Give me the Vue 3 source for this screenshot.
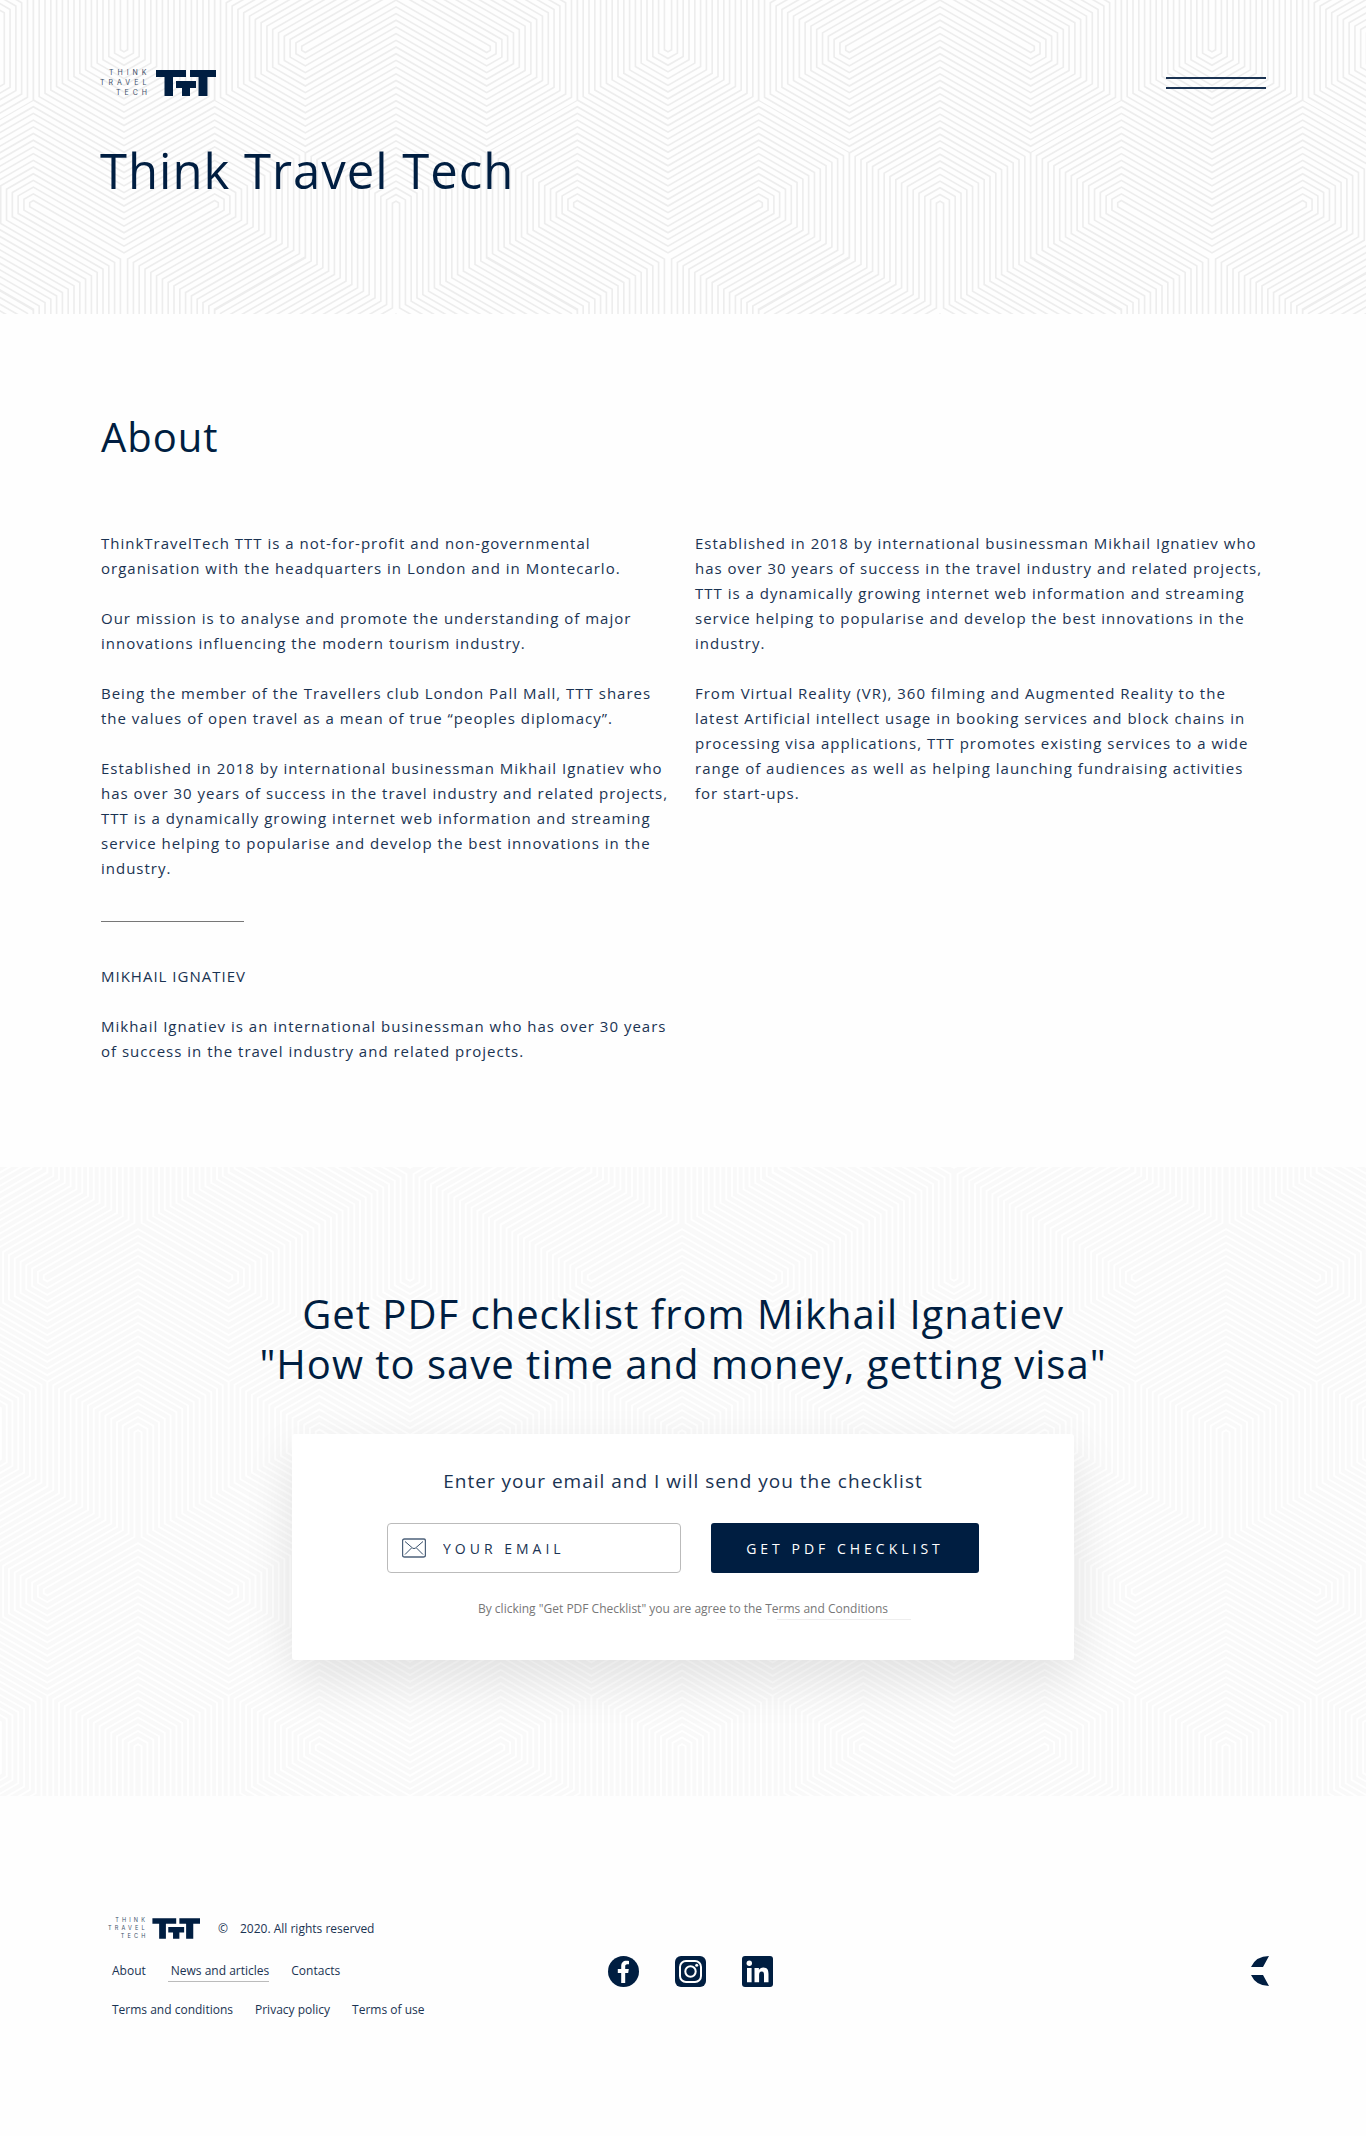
<script setup>
import { h, ref } from 'vue'

const email = ref('')

const leftColumn = [
  'ThinkTravelTech TTT is a not-for-profit and non-governmental organisation with the headquarters in London and in Montecarlo.',
  'Our mission is to analyse and promote the understanding of major innovations influencing the modern tourism industry.',
  'Being the member of the Travellers club London Pall Mall, TTT shares the values of open travel as a mean of true “peoples diplomacy”.',
  'Established in 2018 by international businessman Mikhail Ignatiev who has over 30 years of success in the travel industry and related projects, TTT is a dynamically growing internet web information and streaming service helping to popularise and develop the best innovations in the industry.',
]
const rightColumn = [
  leftColumn[3],
  'From Virtual Reality (VR), 360 filming and Augmented Reality to the latest Artificial intellect usage in booking services and block chains in processing visa applications, TTT promotes existing services to a wide range of audiences as well as helping launching fundraising activities for start-ups.',
]

// Repeating line ornament: nested hexagonal outlines around three-armed seeds.
const TILE_W = 544
const TILE_H = 314
const COL = TILE_W / 6
const ARM = TILE_H / 3

function capsule(x1, y1, x2, y2, d) {
  const s = (2 * d) / Math.sqrt(3)
  const pts = []
  for (const [x, y] of [[x1, y1], [x2, y2]]) {
    pts.push([x, y - s], [x + d, y - s / 2], [x + d, y + s / 2], [x, y + s], [x - d, y + s / 2], [x - d, y - s / 2])
  }
  pts.sort((a, b) => a[0] - b[0] || a[1] - b[1])
  const cross = (o, a, b) => (a[0] - o[0]) * (b[1] - o[1]) - (a[1] - o[1]) * (b[0] - o[0])
  const half = (list) => {
    const out = []
    for (const p of list) {
      while (out.length > 1 && cross(out[out.length - 2], out[out.length - 1], p) <= 0) out.pop()
      out.push(p)
    }
    out.pop()
    return out
  }
  const hull = half(pts).concat(half(pts.slice().reverse()))
  return 'M' + hull.map((p) => p[0].toFixed(2) + ' ' + p[1].toFixed(2)).join('L') + 'Z'
}

const seeds = []
for (let i = -1; i <= 1; i++) {
  for (let j = -1; j <= 2; j++) {
    seeds.push([124 + i * TILE_W, 257 + j * TILE_H - TILE_H, 1])
    seeds.push([396 + i * TILE_W, 310 + j * TILE_H - TILE_H, -1])
  }
}

function outline(d) {
  return seeds
    .map(([x, y, dir]) =>
      capsule(x, y, x, y + dir * ARM, d) +
      capsule(x, y, x - COL, y - (dir * ARM) / 2, d) +
      capsule(x, y, x + COL, y - (dir * ARM) / 2, d))
    .join('')
}

function makeRings(halfLine) {
  const rings = []
  for (let k = 15; k >= 0; k--) {
    const d = 3.6 + k * 5.8
    rings.push({ key: k, outer: outline(d + halfLine), inner: outline(d - halfLine) })
  }
  return rings
}
const heroRings = makeRings(0.8)
const signupRings = makeRings(1)

const Logo = () =>
  h('svg', { viewBox: '0 0 116 26', overflow: 'visible', role: 'img', 'aria-label': 'Think Travel Tech' }, [
    h('g', { fill: '#3d5069', 'font-family': 'Inter, sans-serif', 'font-size': 7, 'letter-spacing': 4 }, [
      h('text', { x: 9, y: 5 }, 'THINK'),
      h('text', { x: 0, y: 15 }, 'TRAVEL'),
      h('text', { x: 16, y: 25 }, 'TECH'),
    ]),
    h('path', {
      fill: '#001e41',
      d: 'M56 0h30v7H73v19h-8.500V7H56zM90 0h26v7h-8.500v19h-9V7H90zM76 11h20v7h-6v8h-8v-8h-6z',
    }),
  ])
</script>

<template>
  <div class="page">
    <header class="hero">
      <svg class="ornament" aria-hidden="true">
        <defs>
          <pattern id="hex-lines" patternUnits="userSpaceOnUse" x="0" y="0" :width="TILE_W" :height="TILE_H">
            <template v-for="r in heroRings" :key="r.key">
              <path :d="r.outer" fill="#ededed" />
              <path :d="r.inner" fill="#fefefe" />
            </template>
          </pattern>
        </defs>
        <rect width="100%" height="100%" fill="url(#hex-lines)" />
      </svg>
      <div class="topbar">
        <a class="logo" href="#"><Logo /></a>
        <button class="menu" type="button" aria-label="Menu"><span></span><span></span></button>
      </div>
      <h1>Think Travel Tech</h1>
    </header>

    <main>
      <section class="about">
        <h2>About</h2>
        <div class="columns">
          <div class="column">
            <p v-for="(text, i) in leftColumn" :key="i">{{ text }}</p>
            <hr />
            <p>MIKHAIL IGNATIEV</p>
            <p>Mikhail Ignatiev is an international businessman who has over 30 years of success in the travel industry and related projects.</p>
          </div>
          <div class="column">
            <p v-for="(text, i) in rightColumn" :key="i">{{ text }}</p>
          </div>
        </div>
      </section>

      <section class="signup">
        <svg class="ornament" aria-hidden="true">
          <defs>
            <pattern id="hex-lines-soft" patternUnits="userSpaceOnUse" x="286" y="62" :width="TILE_W" :height="TILE_H">
              <template v-for="r in signupRings" :key="r.key">
                <path :d="r.outer" fill="#fff" />
                <path :d="r.inner" fill="#f9f9f9" />
              </template>
            </pattern>
          </defs>
          <rect width="100%" height="100%" fill="url(#hex-lines-soft)" />
        </svg>
        <h2>Get PDF checklist from Mikhail Ignatiev<br />"How to save time and money, getting visa"</h2>
        <form class="card" @submit.prevent>
          <label class="lead" for="email">Enter your email and I will send you the checklist</label>
          <div class="fields">
            <div class="field">
              <svg viewBox="0 0 24 20" aria-hidden="true">
                <g fill="none" stroke="#001e41">
                  <rect x="0.500" y="1" width="23" height="18" rx="2" stroke-opacity=".7" stroke-width="1.400" />
                  <path d="M3 3.500l7.500 6.500q1.500 1.200 3 0L21 3.500M3 16.500l6.500-6.500M21 16.500l-6.500-6.500" stroke-width=".8" />
                </g>
              </svg>
              <input id="email" v-model="email" type="email" placeholder="YOUR EMAIL" />
            </div>
            <button class="submit" type="submit">GET PDF CHECKLIST</button>
          </div>
          <p class="note">By clicking "Get PDF Checklist" you are agree to the <a href="#">Terms and Conditions</a></p>
        </form>
      </section>
    </main>

    <footer class="footer">
      <div class="info">
        <div class="copy">
          <a class="logo small" href="#"><Logo /></a>
          <span>©</span>
          <span>2020. All rights reserved</span>
        </div>
        <nav class="links">
          <a href="#">About</a>
          <a class="current" href="#">News and articles</a>
          <a href="#">Contacts</a>
        </nav>
        <nav class="links legal">
          <a href="#">Terms and conditions</a>
          <a href="#">Privacy policy</a>
          <a href="#">Terms of use</a>
        </nav>
      </div>
      <div class="social">
        <a href="#" aria-label="Facebook">
          <svg viewBox="0 0 31 31">
            <circle cx="15.500" cy="15.500" r="15.500" fill="#001e41" />
            <path fill="#fff" d="M13.200 27V16.900H9.800v-3.800h3.400v-3c0-3.500 2-5.400 5.100-5.400 1.400 0 2.700.2 2.700.2v3.400h-1.700c-1.700 0-2.100 1-2.100 2.100v2.700h3.600l-.6 3.800h-3V27z" />
          </svg>
        </a>
        <a href="#" aria-label="Instagram">
          <svg viewBox="0 0 31 31">
            <rect width="31" height="31" rx="6" fill="#001e41" />
            <g fill="none" stroke="#fff" stroke-width="2">
              <rect x="5" y="5" width="21" height="21" rx="6" />
              <circle cx="15.500" cy="15.500" r="5.200" />
            </g>
            <circle cx="21.700" cy="9.300" r="1.500" fill="#fff" />
          </svg>
        </a>
        <a href="#" aria-label="LinkedIn">
          <svg viewBox="0 0 31 31">
            <rect width="31" height="31" rx="3" fill="#001e41" />
            <g fill="#fff">
              <circle cx="7.300" cy="7.300" r="2.700" />
              <path d="M5 12h4.600v14.300H5zM12.500 12h4.400v2c.8-1.400 2.300-2.400 4.400-2.400 4.200 0 5.200 2.800 5.200 6.500v8.200H22v-7.300c0-1.800-.2-3.500-2.300-3.500s-2.600 1.700-2.600 3.400v7.400h-4.600z" />
            </g>
          </svg>
        </a>
      </div>
      <div class="partner">
        <a href="#" aria-label="Partner">
          <svg viewBox="0 0 18 30"><path fill="#001e41" d="M0 11Q5 0 18 0L12 11zM0 19h12l6 11Q5 30 0 19z" /></svg>
        </a>
      </div>
    </footer>
  </div>
</template>

<style>
body {
  margin: 0;
  background: #fefefe;
}
</style>

<style scoped>
.page {
  color: #1a3352;
  font-family: "Open Sans", "Noto Sans", sans-serif;
  font-size: 15px;
  line-height: 25px;
  letter-spacing: 1px;
}
h1,
h2,
p {
  margin: 0;
  font-weight: 400;
}
h1,
h2 {
  color: #001e41;
}
a {
  color: inherit;
  text-decoration: none;
}
svg {
  display: block;
}
.hero {
  position: relative;
  box-sizing: border-box;
  min-height: 314px;
  padding: 70px 100px 0;
}
.ornament {
  position: absolute;
  inset: 0;
  z-index: -1;
  width: 100%;
  height: 100%;
}
.topbar {
  display: flex;
  justify-content: space-between;
}
.logo svg {
  width: 116px;
  height: 26px;
}
.menu {
  display: flex;
  flex-direction: column;
  gap: 8px;
  width: 100px;
  padding: 7px 0;
  border: 0;
  background: none;
}
.menu span {
  width: 100%;
  height: 2px;
  background: #1b3352;
}
h1 {
  margin-top: 39px;
  font-size: 49px;
  line-height: 70px;
}
h2 {
  font-size: 40px;
  line-height: 50px;
}
.about {
  padding: 98px 101px 78px;
}
.columns {
  display: flex;
  gap: 24px;
  margin-top: 69px;
}
.column {
  flex: 1;
}
.column p {
  margin-bottom: 25px;
}
hr {
  width: 143px;
  height: 1px;
  margin: 40px 0 42px;
  border: 0;
  background: #777;
}
.signup {
  position: relative;
  z-index: 0;
  padding: 122px 20px 136px;
  background: #f9f9f9;
  text-align: center;
}
.card {
  display: flex;
  flex-direction: column;
  align-items: center;
  box-sizing: border-box;
  max-width: 782px;
  min-height: 226px;
  margin: 45px auto 0;
  padding: 35px 20px 0;
  border-radius: 3px;
  background: #fff;
  box-shadow: 0 20px 50px rgba(0, 0, 0, 0.1);
}
.lead {
  font-size: 19px;
  line-height: 25px;
}
.fields {
  display: flex;
  gap: 30px;
  margin-top: 29px;
}
.field {
  display: flex;
  align-items: center;
  gap: 17px;
  box-sizing: border-box;
  width: 294px;
  height: 50px;
  padding: 0 14px;
  border: 1px solid #bbb;
  border-radius: 4px;
}
.field svg {
  flex: none;
  width: 24px;
  height: 20px;
}
.field input {
  flex: 1;
  min-width: 0;
  padding: 0;
  border: 0;
  outline: 0;
  background: none;
  color: #1a3352;
  font: inherit;
  font-size: 14px;
  letter-spacing: 4px;
}
.field input::placeholder {
  color: #1a3352;
  opacity: 1;
}
.submit {
  width: 268px;
  height: 50px;
  border: 0;
  border-radius: 3px;
  background: #001e41;
  color: #fff;
  font: inherit;
  font-size: 14px;
  letter-spacing: 4px;
}
.note {
  margin-top: 23px;
  color: #777;
  font-size: 12px;
  letter-spacing: 0;
}
.note a {
  position: relative;
}
.note a::after {
  content: "";
  position: absolute;
  top: 19px;
  left: 12px;
  width: 134px;
  height: 1px;
  background: #eee;
}
.footer {
  display: grid;
  grid-template-columns: 1fr auto 1fr;
  padding: 122px 97px 105px 112px;
  font-size: 12px;
  line-height: 20px;
  letter-spacing: 0;
}
.copy {
  display: flex;
  align-items: center;
  gap: 12px;
  margin-left: -4px;
}
.small {
  margin-right: 6px;
}
.small svg {
  width: 92px;
  height: 21px;
}
.links {
  display: flex;
  gap: 22px;
  margin-top: 22px;
}
.legal {
  margin-top: 18px;
}
.current {
  padding-left: 3px;
  border-bottom: 1px solid #bbb;
}
.social {
  display: flex;
  gap: 36px;
  padding-top: 38px;
}
.social svg {
  width: 31px;
  height: 31px;
}
.partner {
  display: flex;
  justify-content: flex-end;
  padding-top: 38px;
}
.partner svg {
  width: 18px;
  height: 30px;
}
</style>
